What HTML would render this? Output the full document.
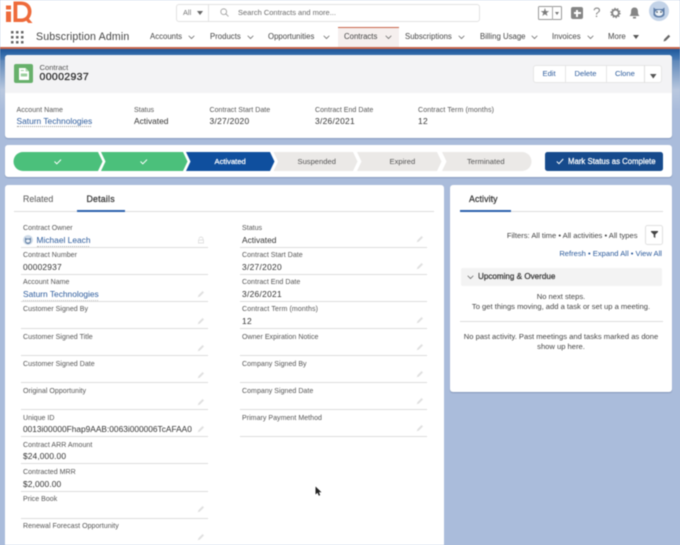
<!DOCTYPE html>
<html><head><meta charset="utf-8"><style>
html,body{margin:0;padding:0}
body{width:680px;height:545px;overflow:hidden;position:relative;background:#aabcdb;font-family:"Liberation Sans",sans-serif}
#w{position:absolute;left:0;top:0;width:680px;height:545px;overflow:hidden;filter:blur(.4px)}
.a{position:absolute}
.t{position:absolute;white-space:nowrap;line-height:12px;height:12px}
.l{font-size:7.05px;color:#555;letter-spacing:.02px;margin-top:1px}
.v{font-size:8.4px;color:#333}
.d{letter-spacing:.3px}
.n{font-size:7.8px;color:#444}
.h{position:absolute;height:1px;background:#dcdcdc}
svg{position:absolute;overflow:visible}
.p{font-size:7.6px;color:#444}
.s{-webkit-text-stroke:.22px currentColor}
.k{color:#2c5b9c}
</style></head><body><div id="w">
<svg width="0" height="0" style="position:absolute"><defs>
<symbol id="pen" viewBox="0 0 8 8"><path d="M.8 7.2l.6-2L5.6 1l1.4 1.4-4.2 4.2z" fill="#e0e0e0"/></symbol>
<symbol id="chev" viewBox="0 0 8 5"><path d="M.8.8L4 4l3.2-3.2" fill="none" stroke="#6a6a6a" stroke-width=".9"/></symbol>
</defs></svg>

<!-- background band -->
<div class="a" style="left:0;top:49px;width:680px;height:60px;background:linear-gradient(#1f5699 0,#2f68a8 8%,#7f9fca 35%,#aabcdb 80%)"></div>
<div class="a" style="left:0;top:60px;width:5px;height:50px;background:linear-gradient(#5d86b8,#b9c8df 60%,#aabcdb)"></div>
<div class="a" style="left:672px;top:60px;width:8px;height:50px;background:linear-gradient(#5d86b8,#b9c8df 60%,#aabcdb)"></div>

<!-- header -->
<div class="a" style="left:0;top:0;width:680px;height:47px;background:#fff"></div>
<div class="a" style="left:0;top:47px;width:680px;height:2px;background:#c8664a"></div>
<svg style="left:0;top:0" width="40" height="26" viewBox="0 0 40 26">
<rect x="6" y="5.500" width="5" height="4" fill="#ee6a3a"/><rect x="6" y="11.500" width="5" height="10.500" fill="#ee6a3a"/>
<path d="M13.500 1.500H21c6.500 0 10.500 4.200 10.500 10 0 3-1 5.400-2.600 7.300l3.600 4.200h-4.200l-2-2.300c-1.500.8-3.200 1.300-5.300 1.300h-7.500zM17.300 5v13.500H21c4.300 0 6.800-3 6.800-6.800S25.300 5 21 5z" fill="#ee6a3a"/></svg>

<div class="a" style="left:175.500px;top:3.500px;width:304px;border:1px solid #e2e2e2;border-radius:3px;box-sizing:border-box;height:18px"></div>
<div class="a" style="left:208px;top:4px;width:1px;height:17px;background:#e2e2e2"></div>
<div class="t" style="left:183px;top:6.500px;font-size:7.400px;color:#777">All</div>
<svg style="left:197px;top:11px" width="6" height="4"><path d="M0 0h6L3 4z" fill="#666"/></svg>
<svg style="left:220px;top:8px" width="9" height="9" viewBox="0 0 9 9"><circle cx="3.700" cy="3.700" r="2.900" fill="none" stroke="#999" stroke-width=".8"/><path d="M5.800 5.800L8.500 8.500" stroke="#999" stroke-width=".8"/></svg>
<div class="t" style="left:238px;top:6.500px;font-size:7.500px;color:#6a6a6a">Search Contracts and more...</div>

<div class="a" style="left:537.500px;top:6px;width:24px;height:14px;border:1px solid #999;box-sizing:border-box;border-radius:1.500px;background:#fff"></div>
<div class="a" style="left:552px;top:6px;width:1px;height:14px;background:#aaa"></div>
<div class="t" style="left:540px;top:7px;font-size:11px;color:#7a7a7a">★</div>
<svg style="left:555px;top:12px" width="4" height="3"><path d="M0 0h4L2 3z" fill="#777"/></svg>
<div class="a" style="left:571px;top:7px;width:12px;height:12px;background:#858585;border-radius:2px"></div>
<div class="a" style="left:576px;top:9.500px;width:2px;height:7px;background:#fff"></div>
<div class="a" style="left:573.500px;top:12px;width:7px;height:2px;background:#fff"></div>
<div class="t" style="left:593px;top:7px;font-size:13.500px;color:#888">?</div>
<svg style="left:610px;top:7px" width="11" height="12" viewBox="0 0 11 12"><circle cx="5.500" cy="6" r="3.300" fill="none" stroke="#858585" stroke-width="1.800"/><circle cx="5.500" cy="6" r="4.600" fill="none" stroke="#858585" stroke-width="1.200" stroke-dasharray="1.400 1.500"/></svg>
<svg style="left:628.500px;top:6.500px" width="11" height="12" viewBox="0 0 11 12"><path d="M5.500 .5c2.300 0 3.400 1.700 3.400 3.800 0 2.500.4 3.400 1.600 4.700H.5c1.200-1.300 1.600-2.200 1.600-4.700C2.100 2.200 3.200.500 5.500.500z" fill="#858585"/><rect x="4" y="9.800" width="3" height="1.700" fill="#858585"/></svg>
<svg style="left:649px;top:1px" width="20" height="20" viewBox="0 0 20 20"><circle cx="10" cy="10" r="10" fill="#c3d3e8"/><path d="M4.500 14V6.500l2 1.500h7l2-1.500V14c-1.500 2-3 2.500-5.500 2.500S6 16 4.500 14z" fill="#5f7ea8"/><ellipse cx="10" cy="12" rx="4" ry="3" fill="#eef3f8"/><circle cx="8" cy="11" r=".8" fill="#345"/><circle cx="12" cy="11" r=".8" fill="#345"/></svg>

<!-- nav -->
<div class="a" style="left:338px;top:27px;width:61px;height:20px;background:#f5efee;border-top:1px solid #c8664a;box-sizing:border-box"></div>
<svg style="left:11px;top:31px" width="13" height="13"><g fill="#666"><rect x="0" y="0" width="2.500" height="2.500"/><rect x="5" y="0" width="2.500" height="2.500"/><rect x="10" y="0" width="2.500" height="2.500"/><rect x="0" y="5" width="2.500" height="2.500"/><rect x="5" y="5" width="2.500" height="2.500"/><rect x="10" y="5" width="2.500" height="2.500"/><rect x="0" y="10" width="2.500" height="2.500"/><rect x="5" y="10" width="2.500" height="2.500"/><rect x="10" y="10" width="2.500" height="2.500"/></g></svg>
<div class="t" style="left:36px;top:31px;font-size:10.600px;color:#444;letter-spacing:.15px">Subscription Admin</div>
<div class="t n" style="left:150px;top:31px">Accounts</div><svg style="left:188px;top:35px" width="7" height="4.500"><use href="#chev" width="7" height="4.500"/></svg>
<div class="t n" style="left:210px;top:31px">Products</div><svg style="left:247px;top:35px" width="7" height="4.500"><use href="#chev" width="7" height="4.500"/></svg>
<div class="t n" style="left:268px;top:31px">Opportunities</div><svg style="left:323px;top:35px" width="7" height="4.500"><use href="#chev" width="7" height="4.500"/></svg>
<div class="t n" style="left:344px;top:31px">Contracts</div><svg style="left:385px;top:35px" width="7" height="4.500"><use href="#chev" width="7" height="4.500"/></svg>
<div class="t n" style="left:405px;top:31px">Subscriptions</div><svg style="left:458px;top:35px" width="7" height="4.500"><use href="#chev" width="7" height="4.500"/></svg>
<div class="t n" style="left:480px;top:31px">Billing Usage</div><svg style="left:531px;top:35px" width="7" height="4.500"><use href="#chev" width="7" height="4.500"/></svg>
<div class="t n" style="left:552px;top:31px">Invoices</div><svg style="left:587px;top:35px" width="7" height="4.500"><use href="#chev" width="7" height="4.500"/></svg>
<div class="t n" style="left:608px;top:31px">More</div><svg style="left:633px;top:35px" width="6" height="4"><path d="M0 0h6L3 4z" fill="#555"/></svg>
<svg style="left:663px;top:34px" width="8" height="8" viewBox="0 0 8 8"><path d="M.5 7.500l.7-2.300L5.600.8l1.600 1.600-4.400 4.400z" fill="#666"/></svg>

<!-- highlights card -->
<div class="a" style="left:5px;top:55px;width:667px;height:82.500px;background:#fff;border-radius:3px;overflow:hidden;box-shadow:0 1px 1px rgba(60,80,120,.3)">
<div class="a" style="left:0;top:0;width:667px;height:38px;background:#f3f3f5"></div></div>
<div class="a" style="left:14px;top:64px;width:19px;height:19px;background:#67b06b;border-radius:2px"></div>
<svg style="left:18.500px;top:67.500px" width="10" height="12" viewBox="0 0 10 12"><path d="M0 0h6.500L10 3.500V12H0z" fill="#fff"/><path d="M6.500 0v3.500H10z" fill="#b5dcb7"/><rect x="1.800" y="5.500" width="6.400" height="3" fill="#9bcf9e"/><rect x="1.800" y="2" width="3" height="1" fill="#9bcf9e"/></svg>
<div class="t" style="left:39.500px;top:62px;font-size:7.600px;color:#555">Contract</div>
<div class="t s" style="left:39.500px;top:71px;font-size:10.500px;color:#222;letter-spacing:.35px">00002937</div>

<div class="a" style="left:533px;top:65px;width:129px;height:18px;background:#fff;border:1px solid #e6e6e6;box-sizing:border-box;border-radius:3px"></div>
<div class="a" style="left:565px;top:65px;width:1px;height:18px;background:#e6e6e6"></div>
<div class="a" style="left:606px;top:65px;width:1px;height:18px;background:#e6e6e6"></div>
<div class="a" style="left:644px;top:65px;width:1px;height:18px;background:#e0e0e0"></div>
<div class="t k" style="left:542.500px;top:68px;font-size:7.600px">Edit</div>
<div class="t k" style="left:574.500px;top:68px;font-size:7.600px">Delete</div>
<div class="t k" style="left:615px;top:68px;font-size:7.600px">Clone</div>
<svg style="left:650px;top:73.500px" width="6.500" height="4.500"><path d="M0 0h6.500L3.250 4.500z" fill="#555"/></svg>

<div class="t l" style="left:16.500px;top:104px">Account Name</div>
<div class="t v k" style="left:16.500px;top:115px">Saturn Technologies</div>
<div class="a" style="left:17px;top:126px;width:74px;border-top:1px dotted #9a9a9a"></div>
<div class="t l" style="left:134px;top:104px">Status</div><div class="t v" style="left:134px;top:115px">Activated</div>
<div class="t l" style="left:209.500px;top:104px">Contract Start Date</div><div class="t v d" style="left:209.500px;top:115px">3/27/2020</div>
<div class="t l" style="left:315px;top:104px">Contract End Date</div><div class="t v d" style="left:315px;top:115px">3/26/2021</div>
<div class="t l" style="left:418px;top:104px;letter-spacing:.1px">Contract Term (months)</div><div class="t v d" style="left:418px;top:115px">12</div>

<!-- path card -->
<div class="a" style="left:5px;top:145px;width:667px;height:32px;background:#fff;border-radius:3px;box-shadow:0 1px 1px rgba(60,80,120,.3)"></div>
<svg style="left:0;top:152px" width="540" height="19" viewBox="0 0 540 19">
<path d="M23 0H98l4.500 9.500L98 19H23a9.500 9.500 0 0 1 0-19z" fill="#4bc07b"/>
<path d="M101 0H183l4.500 9.500L183 19H101l4.500-9.500z" fill="#4bc07b"/>
<path d="M186 0H270l4.500 9.500L270 19H186l4.500-9.500z" fill="#0f4f9e"/>
<path d="M273.500 0H353l4.500 9.500L353 19H273.500L278 9.500z" fill="#ebe9e7"/>
<path d="M357 0H437l4.500 9.500L437 19H357l4.500-9.500z" fill="#ebe9e7"/>
<path d="M442 0H522a9.500 9.500 0 0 1 0 19H442l4.500-9.500z" fill="#ebe9e7"/>
<path d="M54.500 9.500l2.300 2.300 4.200-4.200M140.500 9.500l2.300 2.300 4.200-4.200" fill="none" stroke="#fff" stroke-width="1"/>
</svg>
<div class="t s" style="left:214.500px;top:155.500px;font-size:7.600px;color:#fff">Activated</div>
<div class="t" style="left:297.500px;top:155.500px;font-size:7.600px;color:#555">Suspended</div>
<div class="t" style="left:389.500px;top:155.500px;font-size:7.600px;color:#555">Expired</div>
<div class="t" style="left:467px;top:155.500px;font-size:7.600px;color:#555">Terminated</div>
<div class="a" style="left:545px;top:152px;width:118px;height:19px;background:#164a8c;border-radius:2.500px"></div>
<svg style="left:556px;top:158px" width="8" height="7"><path d="M.8 3.500l2.200 2.200L7.200 1" fill="none" stroke="#fff" stroke-width="1"/></svg>
<div class="t s" style="left:568px;top:155.500px;font-size:7.800px;color:#fff">Mark Status as Complete</div>

<!-- details card -->
<div class="a" style="left:5px;top:185px;width:439px;height:370px;background:#fff;border-radius:3px"></div>
<div class="t" style="left:23px;top:192.500px;font-size:8.800px;color:#555">Related</div>
<div class="t s" style="left:86.500px;top:192.500px;font-size:8.800px;color:#333;letter-spacing:.2px">Details</div>
<div class="h" style="left:14px;top:211px;width:420px"></div>
<div class="a" style="left:77px;top:210px;width:48px;height:1.500px;background:#2c62ad"></div>

<div class="t l" style="left:23px;top:222px">Contract Owner</div>
<svg style="left:23px;top:235px" width="10" height="10" viewBox="0 0 10 10"><circle cx="5" cy="5" r="5" fill="#cfdbe8"/><path d="M2 7V2.500l1.500 1h3l1.500-1V7C7 8.500 6 9 5 9S3 8.500 2 7z" fill="#6a86aa"/><ellipse cx="5" cy="6" rx="2" ry="1.500" fill="#eef3f8"/></svg>
<div class="t v k" style="left:36.500px;top:234px">Michael Leach</div>
<div class="a" style="left:37px;top:245.500px;width:52px;border-top:1px dotted #b5b5b5"></div>
<svg style="left:198px;top:236px" width="6" height="7"><path d="M1 3a2 2 0 0 1 4 0v1M.5 4h5v3h-5z" fill="none" stroke="#e0e0e0" stroke-width=".9"/></svg>
<div class="h" style="left:21px;top:247px;width:187px"></div>
<div class="t l" style="left:23px;top:249px">Contract Number</div><div class="t v" style="left:23px;top:261px;letter-spacing:.2px">00002937</div><div class="h" style="left:21px;top:274px;width:187px"></div>
<div class="t l" style="left:23px;top:276px">Account Name</div><div class="t v k" style="left:23px;top:288px">Saturn Technologies</div>
<div class="a" style="left:23px;top:299.500px;width:75px;border-top:1px dotted #c5c5c5"></div>
<div class="h" style="left:21px;top:301px;width:187px"></div>
<div class="t l" style="left:23px;top:303px">Customer Signed By</div><div class="h" style="left:21px;top:328px;width:187px"></div>
<div class="t l" style="left:23px;top:330.500px">Customer Signed Title</div><div class="h" style="left:21px;top:355px;width:187px"></div>
<div class="t l" style="left:23px;top:357.500px">Customer Signed Date</div><div class="h" style="left:21px;top:382px;width:187px"></div>
<div class="t l" style="left:23px;top:384.500px">Original Opportunity</div><div class="h" style="left:21px;top:409px;width:187px"></div>
<div class="t l" style="left:23px;top:412px">Unique ID</div><div class="t v" style="left:23px;top:423px;font-size:8.350px">0013i00000Fhap9AAB:0063i000006TcAFAA0</div><div class="h" style="left:21px;top:436px;width:187px"></div>
<div class="t l" style="left:23px;top:439px">Contract ARR Amount</div><div class="t v" style="left:23px;top:450px;letter-spacing:.12px">$24,000.00</div><div class="h" style="left:21px;top:463px;width:187px"></div>
<div class="t l" style="left:23px;top:466px">Contracted MRR</div><div class="t v" style="left:23px;top:478px;letter-spacing:.12px">$2,000.00</div><div class="h" style="left:21px;top:491px;width:187px"></div>
<div class="t l" style="left:23px;top:493px">Price Book</div><div class="h" style="left:21px;top:518px;width:187px"></div>
<div class="t l" style="left:23px;top:520px">Renewal Forecast Opportunity</div>

<svg style="left:197px;top:290px" width="8" height="8"><use href="#pen" width="8" height="8"/></svg>
<svg style="left:197px;top:317px" width="8" height="8"><use href="#pen" width="8" height="8"/></svg>
<svg style="left:197px;top:344px" width="8" height="8"><use href="#pen" width="8" height="8"/></svg>
<svg style="left:197px;top:371px" width="8" height="8"><use href="#pen" width="8" height="8"/></svg>
<svg style="left:197px;top:398px" width="8" height="8"><use href="#pen" width="8" height="8"/></svg>
<svg style="left:197px;top:425px" width="8" height="8"><use href="#pen" width="8" height="8"/></svg>
<svg style="left:197px;top:505px" width="8" height="8"><use href="#pen" width="8" height="8"/></svg>
<svg style="left:197px;top:533px" width="8" height="8"><use href="#pen" width="8" height="8"/></svg>

<div class="t l" style="left:242px;top:222px">Status</div><div class="t v" style="left:242px;top:234px">Activated</div><div class="h" style="left:240px;top:247px;width:187px"></div>
<div class="t l" style="left:242px;top:249px">Contract Start Date</div><div class="t v d" style="left:242px;top:261px">3/27/2020</div><div class="h" style="left:240px;top:274px;width:187px"></div>
<div class="t l" style="left:242px;top:276px">Contract End Date</div><div class="t v d" style="left:242px;top:288px">3/26/2021</div><div class="h" style="left:240px;top:301px;width:187px"></div>
<div class="t l" style="left:242px;top:303px;letter-spacing:.1px">Contract Term (months)</div><div class="t v d" style="left:242px;top:314.500px">12</div><div class="h" style="left:240px;top:328px;width:187px"></div>
<div class="t l" style="left:242px;top:330.500px">Owner Expiration Notice</div><div class="h" style="left:240px;top:355px;width:187px"></div>
<div class="t l" style="left:242px;top:357.500px">Company Signed By</div><div class="h" style="left:240px;top:382px;width:187px"></div>
<div class="t l" style="left:242px;top:384.500px">Company Signed Date</div><div class="h" style="left:240px;top:409px;width:187px"></div>
<div class="t l" style="left:242px;top:412px">Primary Payment Method</div><div class="h" style="left:240px;top:436px;width:187px"></div>

<svg style="left:416px;top:235px" width="8" height="8"><use href="#pen" width="8" height="8"/></svg>
<svg style="left:416px;top:262px" width="8" height="8"><use href="#pen" width="8" height="8"/></svg>
<svg style="left:416px;top:316px" width="8" height="8"><use href="#pen" width="8" height="8"/></svg>
<svg style="left:416px;top:343px" width="8" height="8"><use href="#pen" width="8" height="8"/></svg>
<svg style="left:416px;top:370px" width="8" height="8"><use href="#pen" width="8" height="8"/></svg>
<svg style="left:416px;top:397px" width="8" height="8"><use href="#pen" width="8" height="8"/></svg>
<svg style="left:416px;top:424px" width="8" height="8"><use href="#pen" width="8" height="8"/></svg>

<svg style="left:315px;top:486px" width="7" height="11" viewBox="0 0 7 11"><path d="M.5 .5v8l2-1.800 1.300 3 1.400-.6-1.300-2.900h2.600z" fill="#222"/></svg>

<!-- activity card -->
<div class="a" style="left:450px;top:185px;width:222px;height:206.500px;background:#fff;border-radius:3px;box-shadow:0 1px 1px rgba(60,80,120,.35)"></div>
<div class="t s" style="left:469px;top:192.500px;font-size:8.800px;color:#333;letter-spacing:.1px">Activity</div>
<div class="h" style="left:460px;top:211px;width:203px"></div>
<div class="a" style="left:460px;top:210px;width:50.500px;height:1.500px;background:#2c62ad"></div>
<div class="t p" style="right:42.500px;top:229.500px">Filters: All time • All activities • All types</div>
<div class="a" style="left:645px;top:225px;width:17.500px;height:19.500px;border:1px solid #e0e0e0;box-sizing:border-box;border-radius:2.500px;background:#fff"></div>
<svg style="left:650.500px;top:231px" width="7" height="7"><path d="M0 0h7v1L4.300 3.500V7L2.700 6V3.500L0 1z" fill="#444"/></svg>
<div class="t p k" style="right:18px;top:248px">Refresh • Expand All • View All</div>
<div class="a" style="left:461px;top:268px;width:201px;height:18px;background:#f3f3f3;border-radius:2px"></div>
<svg style="left:467px;top:275px" width="7" height="4.500"><use href="#chev" width="7" height="4.500"/></svg>
<div class="t s" style="left:478px;top:271px;font-size:8.100px;color:#333">Upcoming &amp; Overdue</div>
<div class="t p" style="left:450px;width:222px;text-align:center;top:290.500px">No next steps.</div>
<div class="t p" style="left:450px;width:222px;text-align:center;top:301px">To get things moving, add a task or set up a meeting.</div>
<div class="h" style="left:460px;top:321px;width:203px"></div>
<div class="t p" style="left:450px;width:222px;text-align:center;top:330.500px">No past activity. Past meetings and tasks marked as done</div>
<div class="t p" style="left:450px;width:222px;text-align:center;top:341px">show up here.</div>
</div></body></html>
